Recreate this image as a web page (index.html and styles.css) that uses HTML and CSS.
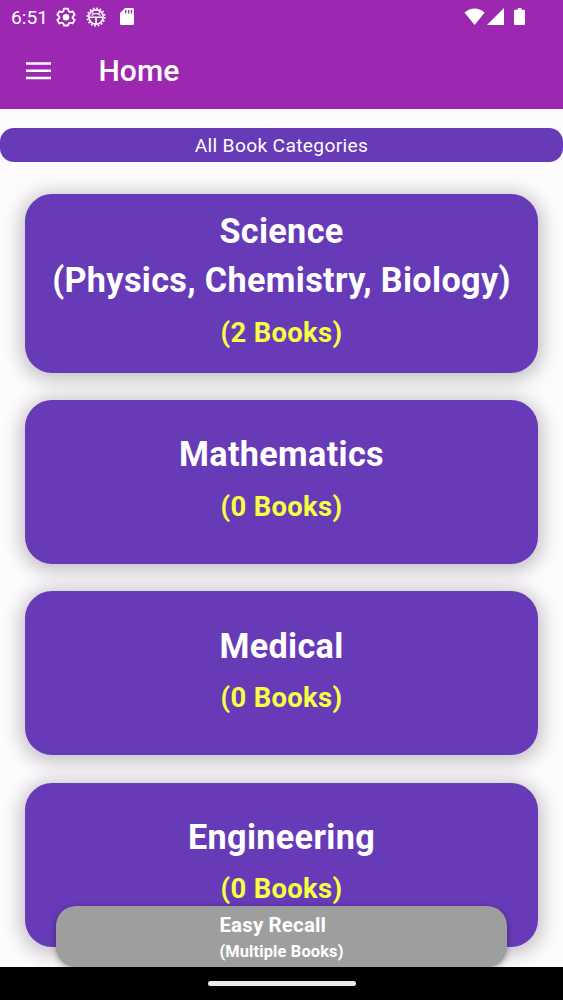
FILE: index.html
```
<!DOCTYPE html>
<html lang="en">
<head>
    <meta charset="UTF-8">
    <meta name="viewport" content="width=device-width, initial-scale=1.0">
    <title>Home</title>
    <link rel="stylesheet" href="styles.css">
</head>
<body>

    <header>
        <div class="status-bar">
            <span class="time">6:51</span>
            <svg class="gear" viewBox="0 0 24 24" width="20" height="20">
                <path fill="none" stroke="#fff" stroke-width="2.200" stroke-linejoin="round" d="M9.500 2h5l.7 3.200 1.600 1 3.100-1 2.500 4.200-2.400 2.200v1.800l2.400 2.200-2.500 4.200-3.100-1-1.600 1-.7 2.400h-5l-.7-2.400-1.600-1-3.100 1-2.500-4.200L4 13.400v-1.800L1.600 9.400l2.500-4.200 3.100 1 1.600-1z"/>
                <circle cx="12" cy="12.300" r="3.900" fill="#fff"/>
            </svg>
            <svg class="debug" viewBox="0 0 20 20" width="20" height="20">
                <circle cx="10" cy="10" r="8.800" fill="none" stroke="#fff" stroke-width="1.600" stroke-dasharray="1.700 1.756"/>
                <circle cx="10" cy="10" r="7.200" fill="none" stroke="#fff" stroke-width="1.700"/>
                <path fill="none" stroke="#fff" stroke-width="1.600" d="M3.500 10.200h13M10 10v7"/>
                <path fill="none" stroke="#fff" stroke-width="1.100" d="M6 5l1.500 1.800M14 5l-1.500 1.800M5.500 8.500Q10 4.500 14.500 8.500"/>
            </svg>
            <svg class="sd-card" viewBox="0 0 14 17" width="14" height="17">
                <path fill="#fff" d="M5 0h7.500Q14 0 14 1.500v14q0 1.500-1.500 1.500h-11Q0 17 0 15.500V5z"/>
                <path stroke="#9c27b0" stroke-width="1.300" d="M5.800 2v3.500M8.700 2v3.500M11.500 2v3.500"/>
            </svg>
            <svg class="signals" viewBox="0 0 62 18" width="62" height="18">
                <path fill="#fff" d="M.5 4.500Q10.500-3.500 20.700 4.500L10.600 17zM40 0v17H23zM51 1.700h2.600V.2h4v1.500H60q1 0 1 1v13.300q0 1-1 1h-9q-1 0-1-1V2.700q0-1 1-1z"/>
            </svg>
        </div>
        <div class="app-bar">
            <svg class="menu" viewBox="0 0 25 18" width="25" height="18">
                <path stroke="#fff" stroke-width="2.500" d="M0 1.500h25M0 8.700h25M0 15.900h25"/>
            </svg>
            <h1>Home</h1>
        </div>
    </header>

    <main>
        <div class="banner">All Book Categories</div>

        <div class="categories">
            <div class="card">
                <h2>Science<br>(Physics, Chemistry, Biology)</h2>
                <p>(2 Books)</p>
            </div>
            <div class="card">
                <h2>Mathematics</h2>
                <p>(0 Books)</p>
            </div>
            <div class="card">
                <h2>Medical</h2>
                <p>(0 Books)</p>
            </div>
            <div class="card">
                <h2>Engineering</h2>
                <p>(0 Books)</p>
            </div>
        </div>
    </main>

    <!-- Floating button over the list -->
    <button class="recall">
        <span class="recall-text">
            <span class="recall-title">Easy Recall</span>
            <span class="recall-sub">(Multiple Books)</span>
        </span>
    </button>

    <footer>
        <div class="handle"></div>
    </footer>

</body>
</html>
```

FILE: styles.css
```
* {
    box-sizing: border-box;
}

body {
    font-family: Roboto, sans-serif;
    margin: 0;
    height: 1000px;
    position: relative;
    display: flex;
    flex-direction: column;
    overflow: hidden;
    background-color: #fefbff;
    color: white;
}

h1, h2, p {
    margin: 0;
}

svg {
    display: block;
    flex: none;
}

/* Header */
header {
    height: 109px;
    flex: none;
    background-color: #9c27b0;
}

.status-bar {
    height: 33px;
    display: flex;
    align-items: center;
    padding: 0 37px 0 11px;
}

.time {
    width: 45px;
    font-size: 19.2px;
    line-height: 33px;
    padding-top: 2px;
}

.debug {
    margin-left: 10px;
}

.sd-card {
    margin-left: 14px;
}

.signals {
    margin-left: auto;
}

.app-bar {
    height: 76px;
    display: flex;
    align-items: center;
    padding-left: 26px;
}

.app-bar h1 {
    margin-left: 47.5px;
    font-size: 30.1px;
    font-weight: 500;
    line-height: 40px;
}

/* Category list */
main {
    flex: 1;
    min-height: 0;
    overflow: hidden;
    padding-top: 19px;
}

.banner {
    height: 34px;
    border-radius: 14px;
    background-color: #673ab7;
    font-size: 19.2px;
    line-height: 35px;
    letter-spacing: 0.34px;
    text-align: center;
}

.categories {
    display: flex;
    flex-direction: column;
    gap: 27.4px;
    padding: 31.8px 24.6px 0;
}

.card {
    flex: none;
    min-height: 164px;
    padding: 13px 0 20px;
    display: flex;
    flex-direction: column;
    justify-content: center;
    border-radius: 27px;
    background-color: #673ab7;
    box-shadow: 0 3px 18px 5px rgba(0, 0, 0, 0.22);
    text-align: center;
    white-space: nowrap;
    letter-spacing: 0.34px;
}

.card + .card {
    margin-top: -0.1px;
}

.card h2 {
    font-size: 34.2px;
    font-weight: bold;
    line-height: 49px;
}

.card p {
    margin-top: 8.5px;
    font-size: 27.4px;
    font-weight: bold;
    line-height: 39px;
    color: #f6ff45;
}

.card:first-child p {
    margin-top: 9px;
}

/* Floating button */
.recall {
    position: absolute;
    left: 56px;
    bottom: 33px;
    width: 451px;
    height: 61px;
    display: flex;
    justify-content: center;
    padding: 6px 0 0;
    border: none;
    border-radius: 20px;
    background-color: #9e9e9e;
    box-shadow: 0 2px 6px rgba(0, 0, 0, 0.35);
    color: white;
    font-family: inherit;
    font-weight: bold;
    letter-spacing: 0.14px;
    text-align: left;
}

.recall-text {
    display: flex;
    flex-direction: column;
}

.recall-title {
    font-size: 20.5px;
    line-height: 27px;
}

.recall-sub {
    font-size: 16.4px;
    line-height: 24px;
    margin-top: 1px;
}

/* Navigation bar */
footer {
    position: relative;
    height: 33px;
    flex: none;
    display: flex;
    align-items: center;
    justify-content: center;
    background-color: black;
}

.handle {
    width: 148px;
    height: 5px;
    border-radius: 3px;
    background-color: #ebebeb;
}
```
